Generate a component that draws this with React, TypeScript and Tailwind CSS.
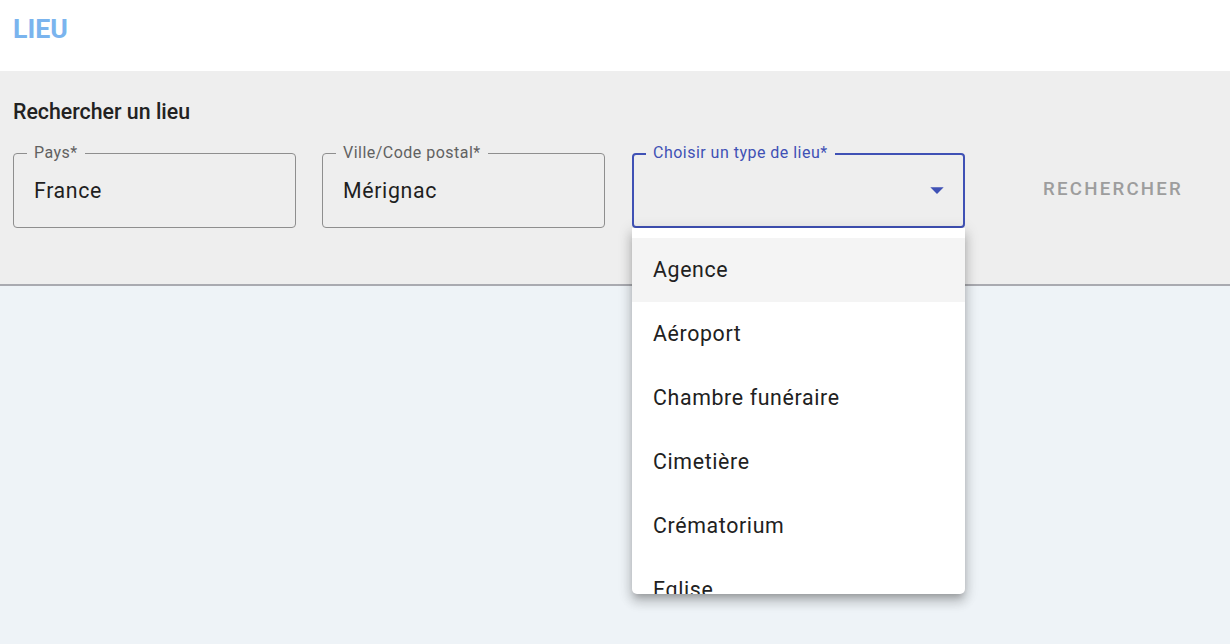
import React from "react";

const items = ["Agence", "Aéroport", "Chambre funéraire", "Cimetière", "Crématorium", "Eglise"];

function Field({ label, value, width }: { label: string; value: string; width: string }) {
  return (
    <div className={`relative h-[75px] ${width} shrink-0 rounded-[4px] border border-[#8e8e8e] flex items-center px-[20px]`}>
      <span className="absolute left-[13px] top-[-9px] px-[7px] bg-[#eeeeee] text-[16px] leading-[16px] text-[#616161] tracking-[0.03em]">
        {label}
      </span>
      <span className="text-[21.33px] text-[#1f1f1f] tracking-[0.03em]">{value}</span>
    </div>
  );
}

export default function App() {
  return (
    <div className="w-[1230px] h-[644px] overflow-hidden bg-[#eef3f7] font-['Roboto',sans-serif]">
      <div className="h-[71px] bg-white px-[13px] flex items-center">
        <span className="text-[26.67px] font-bold text-[#7ab4ee] leading-none mt-[-12px]">LIEU</span>
      </div>
      <div className="bg-[#eeeeee] border-b-2 border-[#a9aab0] px-[13px] pt-[24px] pb-[56px]">
        <div className="text-[21.33px] leading-[34px] font-medium text-[#222222]">Rechercher un lieu</div>
        <div className="mt-[24px] flex items-center">
          <Field label="Pays*" value="France" width="w-[283px]" />
          <div className="ml-[26px]">
            <Field label="Ville/Code postal*" value="Mérignac" width="w-[283px]" />
          </div>
          <div className="ml-[27px] relative w-[333px] h-[75px] shrink-0">
            <div className="relative h-full rounded-[4px] border-2 border-[#3f51b5] flex items-center justify-end pr-[10px]">
              <span className="absolute left-[12px] top-[-10px] px-[7px] bg-[#eeeeee] text-[16px] leading-[16px] text-[#3f51b5] tracking-[0.03em]">
                Choisir un type de lieu*
              </span>
              <svg width="32" height="32" viewBox="0 0 24 24" className="mt-[-2px]">
                <path d="M7 10l5 5 5-5z" fill="#3f51b5" />
              </svg>
            </div>
            <div className="absolute left-0 top-full w-[333px] h-[366px] z-10 bg-white rounded-b-[5px] overflow-hidden shadow-[0_5px_6px_-3px_rgba(0,0,0,0.2),0_8px_11px_1px_rgba(0,0,0,0.14),0_3px_14px_2px_rgba(0,0,0,0.12)] pt-[10px]">
              {items.map((it, i) => (
                <div
                  key={it}
                  className={`h-[64px] flex items-center px-[21px] text-[21.33px] text-[#212121] tracking-[0.03em] ${i === 0 ? "bg-[#f4f4f4]" : ""}`}
                >
                  {it}
                </div>
              ))}
            </div>
          </div>
          <button className="ml-[67px] mt-[-3px] px-[11px] text-[18.67px] font-medium tracking-[0.12em] text-[#9d9d9d] uppercase">
            Rechercher
          </button>
        </div>
      </div>
    </div>
  );
}
